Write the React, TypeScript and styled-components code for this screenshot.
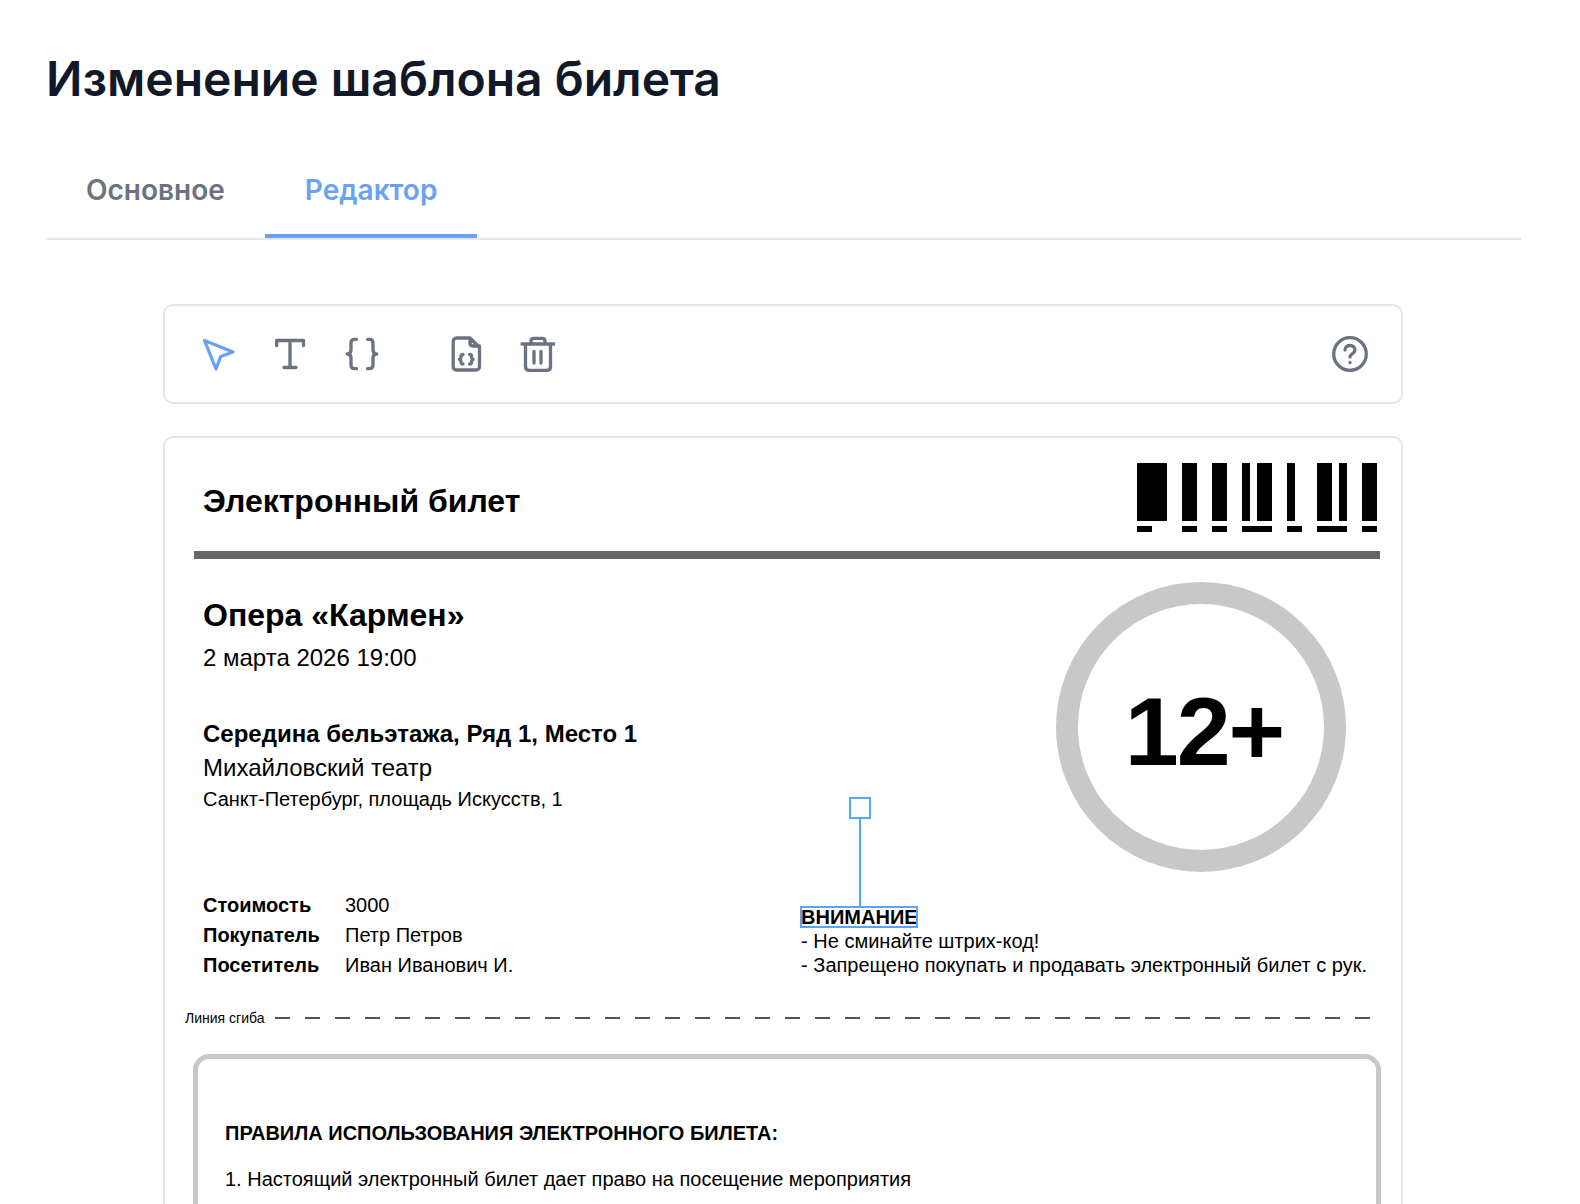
import React from "react";
import styled, { createGlobalStyle } from "styled-components";

const Global = createGlobalStyle`
  html, body { margin: 0; padding: 0; height: 100%; overflow: hidden; background: #fff; }
  * { box-sizing: border-box; }
`;
const Page = styled.div`
  padding: 47px 59px 0 46px;
  font-family: Inter, "Liberation Sans", sans-serif;
`;
const Title = styled.h1`
  margin: 0;
  font-size: 48px;
  line-height: 64px;
  font-weight: 600;
  color: #111827;
`;
const Tabs = styled.div`
  display: flex;
  margin-top: 43px;
  height: 86px;
  border-bottom: 2px solid #e5e7eb;
`;
const Tab = styled.div<{ $active?: boolean }>`
  padding: 0 40px;
  height: 84px;
  line-height: 73px;
  font-size: 28px;
  font-weight: 600;
  color: ${(p) => (p.$active ? "#6ba1f5" : "#6b7280")};
  border-bottom: 4px solid ${(p) => (p.$active ? "#6ba1f5" : "transparent")};
`;
const Editor = styled.div`
  width: 1240px;
  margin: 64px 0 0 117px;
  display: flex;
  flex-direction: column;
  gap: 32px;
`;
const Toolbar = styled.div`
  height: 100px;
  border: 2px solid #e5e7eb;
  border-radius: 10px;
  display: flex;
  align-items: center;
  padding: 0 33px 0 35px;
  color: #6b7280;
`;
const ToolGroup = styled.div`
  display: flex;
  gap: 36px;
  margin-right: 67px;
`;
const ToolIcon = styled.svg<{ $active?: boolean }>`
  width: 36px;
  height: 36px;
  fill: none;
  stroke: ${(p) => (p.$active ? "#6ba1f5" : "#6b7280")};
  stroke-width: 3.3;
  stroke-linecap: round;
  stroke-linejoin: round;
  display: block;
`;
const Spacer = styled.div`
  flex: 1;
`;
const Ticket = styled.div`
  position: relative;
  border: 2px solid #e5e7eb;
  border-radius: 10px;
  padding: 25px 21px 0 29px;
  height: 1000px;
  font-family: "Liberation Sans", Arial, sans-serif;
  color: #000;
`;
const TicketHead = styled.div`
  display: flex;
  justify-content: space-between;
  align-items: flex-start;
  height: 69px;
`;
const TicketTitle = styled.div`
  font-size: 32px;
  line-height: 38px;
  font-weight: 700;
  padding: 19px 0 0 9px;
`;
const Barcode = styled.svg`
  width: 240px;
  height: 69px;
  display: block;
  fill: #000;
  margin-right: 3px;
`;
const Rule = styled.div`
  height: 8px;
  margin-top: 19px;
  background: #666;
`;
const Main = styled.div`
  display: flex;
  justify-content: space-between;
  padding: 23px 34px 0 9px;
`;
const EventInfo = styled.div`
  padding-top: 14px;
`;
const EventName = styled.div`
  font-size: 32px;
  line-height: 38px;
  font-weight: 700;
`;
const EventDate = styled.div`
  font-size: 24px;
  line-height: 28px;
  margin-top: 10px;
`;
const Seat = styled.div`
  font-size: 24px;
  line-height: 28px;
  font-weight: 700;
  margin-top: 48px;
`;
const Venue = styled.div`
  font-size: 24px;
  line-height: 28px;
  margin-top: 6px;
`;
const Address = styled.div`
  font-size: 20px;
  line-height: 24px;
  margin-top: 5px;
`;
const AgeBadge = styled.div`
  width: 290px;
  height: 290px;
  border: 22px solid #c8c8c8;
  border-radius: 50%;
  display: flex;
  align-items: center;
  justify-content: center;
  padding: 10px 0 0 6px;
  font-size: 97px;
  letter-spacing: -2px;
  font-weight: 700;
`;
const Details = styled.div`
  display: flex;
  justify-content: space-between;
  align-items: flex-start;
  padding: 18px 13px 0 9px;
`;
const Props = styled.div`
  display: grid;
  grid-template-columns: 142px auto;
  font-size: 20px;
  line-height: 30px;
`;
const PropName = styled.div`
  font-weight: 700;
`;
const PropValue = styled.div``;
const Notice = styled.div`
  position: relative;
  font-size: 20px;
  line-height: 24px;
  margin-top: 15px;
`;
const NoticeHead = styled.div`
  position: relative;
  font-weight: 700;
  width: max-content;
`;
const Selection = styled.div`
  position: absolute;
  left: -1px;
  top: 1px;
  width: 118px;
  height: 22px;
  border: 2px solid #55a6f8;
  pointer-events: none;
`;
const Stem = styled.div`
  position: absolute;
  left: 57px;
  bottom: 100%;
  width: 2px;
  height: 89px;
  background: #55a6f8;
`;
const Handle = styled.div`
  position: absolute;
  left: -10px;
  top: -22px;
  width: 22px;
  height: 22px;
  border: 2px solid #55a6f8;
  background: #fff;
`;
const FoldRow = styled.div`
  display: flex;
  align-items: center;
  gap: 11px;
  margin: 26px 0 0 -9px;
  font-size: 14px;
  line-height: 24px;
`;
const FoldLine = styled.div`
  flex: 1;
  height: 2px;
  background: repeating-linear-gradient(to right, #555 0 15px, transparent 15px 30px);
`;
const RulesBox = styled.div`
  margin: 24px -1px 0 -1px;
  height: 400px;
  border: 5px solid #c8c8c8;
  border-radius: 16px;
  padding: 62px 27px 0;
`;
const RulesTitle = styled.div`
  font-size: 20px;
  line-height: 24px;
  font-weight: 700;
`;
const RulesItem = styled.div`
  font-size: 20px;
  line-height: 24px;
  margin-top: 22px;
`;

const bars = [[0,30],[45,15],[75,15],[105,8],[120,15],[150,8],[180,15],[202,8],[225,15]];
const lower = [[0,15],[45,15],[75,15],[105,30],[150,15],[180,30],[225,15]];

export default function App() {
  return (
    <Page>
      <Global />
      <Title>Изменение шаблона билета</Title>
      <Tabs>
        <Tab>Основное</Tab>
        <Tab $active>Редактор</Tab>
      </Tabs>
      <Editor>
        <Toolbar>
          <ToolGroup>
            <ToolIcon $active viewBox="0 0 36 36"><path d="M4.500 4.500L33 16L20.700 20.500L16 33Z" /></ToolIcon>
            <ToolIcon viewBox="0 0 36 36"><path d="M4.700 9.500V4.500H31.500V9.500M18 4.500V31.500M12 31.500H24" /></ToolIcon>
            <ToolIcon viewBox="0 0 36 36"><path d="M12.500 3.300H10.500C8 3.300 7 4.500 7 7V14C7 16.500 5.500 18 3.300 18C5.500 18 7 19.500 7 22V29C7 31.500 8 32.700 10.500 32.700H12.500M23.500 3.300H25.500C28 3.300 29 4.500 29 7V14C29 16.500 30.500 18 32.700 18C30.500 18 29 19.500 29 22V29C29 31.500 28 32.700 25.500 32.700H23.500" /></ToolIcon>
          </ToolGroup>
          <ToolGroup>
            <ToolIcon viewBox="0 0 36 36"><path d="M23 2H9.700C7.500 2 6.200 3.500 6.200 5.500V30.500C6.200 32.500 7.500 34 9.700 34H29C31 34 32.500 32.500 32.500 30.500V11.500L23 2ZM23 2V7C23 9 24 10 26 10H32.500M16 18.500C14 18.500 14 19.500 14 21C14 22.500 13.500 23 12.500 23.300C13.500 23.600 14 24.500 14 26C14 27 14 28 16 28M22.600 18.500C24.600 18.500 24.600 19.500 24.600 21C24.600 22.500 25.100 23 26.100 23.300C25.100 23.600 24.600 24.500 24.600 26C24.600 27 24.600 28 22.600 28" /></ToolIcon>
            <ToolIcon viewBox="0 0 36 36"><path d="M3 8H35M12 8V5C12 3.300 13.300 2.300 15 2.300H23C24.700 2.300 26 3.300 26 5V8M6.500 8V30.500C6.500 33 8 34.500 10.500 34.500H27.500C30 34.500 31.500 33 31.500 30.500V8M15 15.500V27M22 15.500V27" /></ToolIcon>
          </ToolGroup>
          <Spacer />
          <ToolIcon viewBox="0 0 36 36"><circle cx="18" cy="18" r="16.300" /><path d="M13 14C13 11 15.500 9.500 18 9.500C21 9.500 23 11.500 23 14C23 17.500 18 18 18 21" /><path d="M18 26.500V26.600" /></ToolIcon>
        </Toolbar>
        <Ticket>
          <TicketHead>
            <TicketTitle>Электронный билет</TicketTitle>
            <Barcode viewBox="0 0 240 69">
              {bars.map(([x, w]) => <rect key={x} x={x} y={0} width={w} height={58} />)}
              {lower.map(([x, w]) => <rect key={x} x={x} y={63} width={w} height={6} />)}
            </Barcode>
          </TicketHead>
          <Rule />
          <Main>
            <EventInfo>
              <EventName>Опера «Кармен»</EventName>
              <EventDate>2 марта 2026 19:00</EventDate>
              <Seat>Середина бельэтажа, Ряд 1, Место 1</Seat>
              <Venue>Михайловский театр</Venue>
              <Address>Санкт-Петербург, площадь Искусств, 1</Address>
            </EventInfo>
            <AgeBadge>12+</AgeBadge>
          </Main>
          <Details>
            <Props>
              <PropName>Стоимость</PropName><PropValue>3000</PropValue>
              <PropName>Покупатель</PropName><PropValue>Петр Петров</PropValue>
              <PropName>Посетитель</PropName><PropValue>Иван Иванович И.</PropValue>
            </Props>
            <Notice>
              <NoticeHead>
                ВНИМАНИЕ
                <Selection>
                  <Stem><Handle /></Stem>
                </Selection>
              </NoticeHead>
              <div>- Не сминайте штрих-код!</div>
              <div>- Запрещено покупать и продавать электронный билет с рук.</div>
            </Notice>
          </Details>
          <FoldRow>
            Линия сгиба
            <FoldLine />
          </FoldRow>
          <RulesBox>
            <RulesTitle>ПРАВИЛА ИСПОЛЬЗОВАНИЯ ЭЛЕКТРОННОГО БИЛЕТА:</RulesTitle>
            <RulesItem>1. Настоящий электронный билет дает право на посещение мероприятия</RulesItem>
          </RulesBox>
        </Ticket>
      </Editor>
    </Page>
  );
}
